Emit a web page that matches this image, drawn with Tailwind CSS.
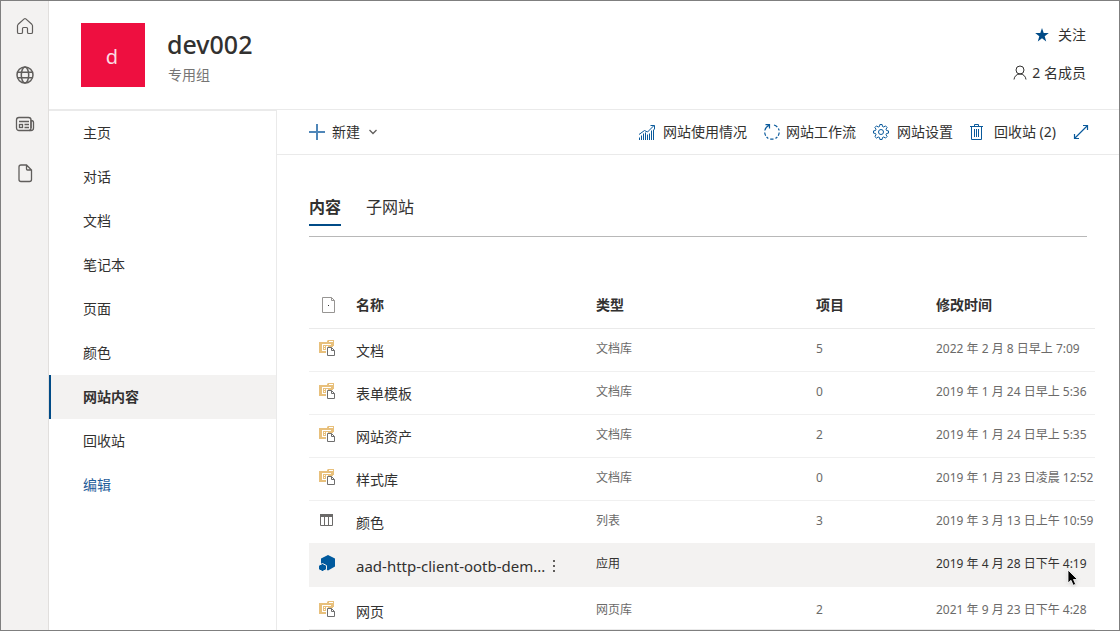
<!DOCTYPE html>
<html lang="zh-CN">
<head>
<meta charset="utf-8">
<meta name="viewport" content="width=device-width, initial-scale=1">
<title>dev002 - 网站内容</title>
<script src="https://cdn.jsdelivr.net/npm/@tailwindcss/browser@4"></script>
</head>
<body class="bg-white font-['Noto_Sans','Noto_Sans_CJK_SC',sans-serif] text-sm text-[#323130]">
<svg class="hidden" aria-hidden="true">
  <symbol id="library" viewBox="0 0 16 16">
    <path fill="#e8c07c" d="M0 2h8V1l1-1h6v6h-1v1H7v6H0z"/>
    <path fill="#fff" d="M10 1h4v1h-4zM3 4h9v1H4v5h3v1H3z"/>
    <path fill="#fff" d="M5 6h1v1H5zM7 6h2v1H7zM5 8h1v1H5z"/>
    <path fill="#fff" stroke="#6e6e6e" d="M8.500 7.500h4l3 3v5h-7z"/>
    <path fill="none" stroke="#6e6e6e" d="M12.500 7.500v3h3"/>
  </symbol>
</svg>
<div class="flex min-h-screen border border-[#7f7f7f]">
  <nav aria-label="应用栏" class="flex w-12 shrink-0 flex-col items-center gap-[29px] border-r border-[#e1dfdd] bg-[#f3f2f1] pt-[15px] text-[#605e5c]">
    <a href="#" aria-label="主页"><svg class="size-5" viewBox="0 0 20 20" fill="none" stroke="currentColor" stroke-width="1.200"><path d="M9.200 2.900a1.200 1.200 0 0 1 1.600 0l6 5.400c.4.400.7.900.7 1.500v6.400c0 .7-.5 1.300-1.300 1.300h-2.400c-.7 0-1.300-.5-1.300-1.300V12.500c0-.6-.4-1-1-1h-3c-.6 0-1 .4-1 1v3.700c0 .7-.5 1.300-1.300 1.300H3.800c-.8 0-1.300-.6-1.300-1.300V9.800c0-.6.3-1.100.7-1.500z"/></svg></a>
    <a href="#" aria-label="我的网站"><svg class="size-5" viewBox="0 0 20 20" fill="none" stroke="currentColor" stroke-width="1.500"><circle cx="10" cy="10" r="8"/><ellipse cx="10" cy="10" rx="3.700" ry="8"/><path d="M2.700 7.300h14.600M2.700 12.700h14.600"/></svg></a>
    <a href="#" aria-label="新闻"><svg class="size-5" viewBox="0 0 20 20" fill="none" stroke="currentColor" stroke-width="1.300"><rect x="1.500" y="3.500" width="14.500" height="13" rx="2.500"/><path d="M16 6.500c1.500 0 2.500.8 2.500 2V14c0 1.500-1 2.500-2.500 2.500h-2M16 6v8M4 7.500h10M9.500 10.500H14M9.500 13.500H14"/><rect x="4.500" y="10.500" width="3" height="3"/></svg></a>
    <a href="#" aria-label="文件"><svg class="size-5" viewBox="0 0 20 20" fill="none" stroke="currentColor" stroke-width="1.300"><path d="M6 2h5.500l5 5v9.500c0 1.200-.8 2-2 2H6c-1.200 0-2-.8-2-2V4c0-1.200.8-2 2-2zM11.500 2v4c0 .6.400 1 1 1h4"/></svg></a>
  </nav>
  <div class="flex min-w-0 flex-1 flex-col">
    <header class="flex items-start justify-between border-b border-[#eaeaea] pt-[22px] pr-[33px] pb-[22px] pl-8">
      <div class="flex gap-[22px]">
        <div class="flex size-16 items-center justify-center bg-[#ee0f40] pt-1 pr-0.5 pb-px text-xl text-[#fbdbe2]" aria-hidden="true">d</div>
        <div>
          <h1 class="pt-1 text-[25px] leading-[34px] font-medium">dev002</h1>
          <p class="pt-1 pl-px leading-5 text-[#767574]">专用组</p>
        </div>
      </div>
      <div class="flex flex-col items-end gap-[18px] pt-0.5">
        <button class="flex items-center gap-2 leading-5"><svg class="size-4 text-[#004b87]" viewBox="0 0 16 16" fill="currentColor"><path d="m8 1 1.700 5h5.100l-4.100 3.200 1.500 5.200L8 11.300l-4.200 3.100 1.500-5.200L1.200 6h5.100z"/></svg>关注</button>
        <button class="flex items-center gap-1 leading-5"><svg class="size-4" viewBox="0 0 16 16" fill="none" stroke="currentColor"><circle cx="8" cy="5" r="4"/><path d="M2 14.500C2.400 11.200 4.700 9 8 9s5.600 2.200 6 5.500"/></svg>2 名成员</button>
      </div>
    </header>
    <div class="flex flex-1">
      <nav aria-label="网站导航" class="w-[228px] shrink-0 border-t border-r border-[#eaeaea]">
        <ul class="leading-[44px]">
          <li><a href="#" class="block pl-[34px]">主页</a></li>
          <li><a href="#" class="block pl-[34px]">对话</a></li>
          <li><a href="#" class="block pl-[34px]">文档</a></li>
          <li><a href="#" class="block pl-[34px]">笔记本</a></li>
          <li><a href="#" class="block pl-[34px]">页面</a></li>
          <li><a href="#" class="block pl-[34px]">颜色</a></li>
          <li><a href="#" aria-current="page" class="block border-l-2 border-[#004b87] bg-[#f3f2f1] pl-8 font-bold">网站内容</a></li>
          <li><a href="#" class="block pl-[34px]">回收站</a></li>
          <li><a href="#" class="block pl-[34px] text-[#1f5c99]">编辑</a></li>
        </ul>
      </nav>
      <main class="min-w-0 flex-1">
        <div role="toolbar" aria-label="命令" class="flex h-[45px] items-center justify-between border-b border-[#eaeaea] pr-[30px] pl-8">
          <button class="flex items-center gap-[7px]"><svg class="size-4" viewBox="0 0 16 16" fill="none" stroke="#4f86b8" stroke-width="2"><path d="M8 0v16M0 8h16"/></svg>新建<svg class="size-3" viewBox="0 0 12 12" fill="none" stroke="#605e5c" stroke-width="1.300"><path d="m2.500 4 3.500 3.500L9.500 4"/></svg></button>
          <div class="flex items-center gap-[17px] text-[#0a5a9c]">
            <button class="flex items-center gap-2"><svg class="size-4" viewBox="0 0 16 16" fill="none" stroke="currentColor"><path d="M.5 16v-2.500M2.500 16v-4.500M4.500 16V9.500M6.500 16V8.500M8.500 16v-5.500M10.500 16V9.500M12.500 16V6.500M14.500 16V5.500M0 10.500l5.500-4L8.500 8l6.500-6.500M11.500 1.500h4v4"/></svg><span class="text-[#323130]">网站使用情况</span></button>
            <button class="flex items-center gap-1.5"><svg class="size-4" viewBox="0 0 16 16" fill="none" stroke="currentColor" stroke-width="1.200"><path d="M5.200 1.200A7.300 7.300 0 0 0 .8 6.500M.7 8.500a7.300 7.300 0 0 0 1 3.200M2.600 13a7.300 7.300 0 0 0 1.700 1.400M1.500.6h4v4M10 1a7.300 7.300 0 0 1 3.300 2M14.400 4.500a7.300 7.300 0 0 1 .7 2M15.200 8.500a7.300 7.300 0 0 1-1 3.200M13.300 13a7.300 7.300 0 0 1-1.800 1.400M6.200 15.200h3.300"/></svg><span class="text-[#323130]">网站工作流</span></button>
            <button class="flex items-center gap-2"><svg class="size-4" viewBox="0 0 16 16" fill="none" stroke="currentColor"><path d="M6.900.5h2.200l.4 2 1.300.5 1.700-1.100 1.600 1.600L13 5.200l.5 1.300 2 .4v2.200l-2 .4-.5 1.300 1.100 1.700-1.600 1.600-1.700-1.100-1.300.5-.4 2H6.900l-.4-2-1.300-.5-1.700 1.100-1.600-1.600L3 10.800l-.5-1.300-2-.4V6.900l2-.4L3 5.200 1.900 3.500l1.600-1.600L5.200 3l1.300-.5z"/><circle cx="8" cy="8" r="2.500"/></svg><span class="text-[#323130]">网站设置</span></button>
            <button class="flex items-center gap-2"><svg class="size-4" viewBox="0 0 16 16" fill="none" stroke="currentColor"><path d="M0 2.500h13M4.500 2V.5h4V2M1.500 3v12.500h10V3M4.500 5v8M6.500 5v8M8.500 5v8"/></svg><span class="text-[#323130]">回收站 (2)</span></button>
            <button aria-label="展开"><svg class="size-4" viewBox="0 0 16 16" fill="none" stroke="currentColor" stroke-width="1.200"><path d="M1.500 14.500l13-13M10 1.500h4.500V6M1.500 10v4.500H6"/></svg></button>
          </div>
        </div>
        <div role="tablist" class="mt-[38px] mr-8 ml-8 flex gap-[25px] border-b border-[#b8b8b8] pb-2.5 text-base leading-7">
          <button role="tab" aria-selected="true" class="border-b-2 border-[#004b87] pb-[3px] font-bold">内容</button>
          <button role="tab" aria-selected="false" class="border-b-2 border-transparent pb-[3px]">子网站</button>
        </div>
        <div class="mt-[46px] pr-6 pl-8">
          <table class="w-full table-fixed text-left text-xs text-[#6b6a69]">
            <colgroup><col class="w-[47px]"><col class="w-60"><col><col class="w-[120px]"><col class="w-[159px]"></colgroup>
            <thead class="text-sm text-[#323130]">
              <tr class="h-[45px] border-b border-[#eaeaea]">
                <th class="pl-3" aria-label="图标"><svg class="size-4" viewBox="0 0 16 16" fill="none" stroke="#979593"><path d="M1.500.5h9l3 3v12h-12zM10.500.5v3h3"/><path stroke="#323130" d="M7 8.500h1"/></svg></th>
                <th>名称</th><th>类型</th><th>项目</th><th>修改时间</th>
              </tr>
            </thead>
            <tbody>
              <tr class="h-[43px] border-b border-[#f0f0f0]"><td class="pl-2.5"><svg class="mb-1 size-4"><use href="#library"/></svg></td><td class="pt-0.5 text-sm text-[#323130]"><a href="#">文档</a></td><td class="pb-0.5">文档库</td><td class="pb-0.5">5</td><td class="pb-0.5 whitespace-nowrap">2022 年 2 月 8 日早上 7:09</td></tr>
              <tr class="h-[43px] border-b border-[#f0f0f0]"><td class="pl-2.5"><svg class="mb-1 size-4"><use href="#library"/></svg></td><td class="pt-0.5 text-sm text-[#323130]"><a href="#">表单模板</a></td><td class="pb-0.5">文档库</td><td class="pb-0.5">0</td><td class="pb-0.5 whitespace-nowrap">2019 年 1 月 24 日早上 5:36</td></tr>
              <tr class="h-[43px] border-b border-[#f0f0f0]"><td class="pl-2.5"><svg class="mb-1 size-4"><use href="#library"/></svg></td><td class="pt-0.5 text-sm text-[#323130]"><a href="#">网站资产</a></td><td class="pb-0.5">文档库</td><td class="pb-0.5">2</td><td class="pb-0.5 whitespace-nowrap">2019 年 1 月 24 日早上 5:35</td></tr>
              <tr class="h-[43px] border-b border-[#f0f0f0]"><td class="pl-2.5"><svg class="mb-1 size-4"><use href="#library"/></svg></td><td class="pt-0.5 text-sm text-[#323130]"><a href="#">样式库</a></td><td class="pb-0.5">文档库</td><td class="pb-0.5">0</td><td class="pb-0.5 whitespace-nowrap">2019 年 1 月 23 日凌晨 12:52</td></tr>
              <tr class="h-[43px]"><td class="pl-2.5"><svg class="mb-1 size-4" viewBox="0 0 16 16" fill="none" stroke="#6b6a69"><path d="M1.500 2.500h12v11h-12zM5.500 4v9M9.500 4v9"/><path fill="#6b6a69" stroke="none" d="M1 2h13v3H1z"/></svg></td><td class="pt-0.5 text-sm text-[#323130]"><a href="#">颜色</a></td><td class="pb-0.5">列表</td><td class="pb-0.5">3</td><td class="pb-0.5 whitespace-nowrap">2019 年 3 月 13 日上午 10:59</td></tr>
              <tr class="h-11 bg-[#f3f2f1] text-[#323130]"><td class="pl-2.5"><svg class="mb-1 size-4" viewBox="0 0 16 16" fill="#005a9e"><path d="m9 0 7 3.500v8L9 15.500l-1-.5c0-3-1.500-5-4-5.500L2 9V3.500z"/><path stroke="#f3f2f1" d="m3.500 8.500 4 2v4l-4 2-4-2v-4z"/></svg></td><td class="pt-0.5 text-[15px]"><span class="flex items-center gap-1.5"><a href="#">aad-http-client-ootb-dem...</a><button aria-label="更多操作"><svg class="h-4 w-1.5" viewBox="0 0 6 16" fill="#605e5c"><path d="M2 2h2v2H2zM2 7h2v2H2zM2 12h2v2H2z"/></svg></button></span></td><td class="pb-0.5">应用</td><td></td><td class="relative pb-0.5 whitespace-nowrap">2019 年 4 月 28 日下午 4:19<svg class="absolute top-[26px] right-[14px] h-[18px] w-3.5 drop-shadow" viewBox="0 0 14 18" aria-hidden="true"><path fill="#000" stroke="#fff" stroke-width=".8" d="M1 1v13l3-2.700 2.200 5 2.500-1.100L6.500 10.500h4z"/></svg></td></tr>
              <tr class="h-[42px] border-b border-[#eaeaea]"><td class="pl-2.5"><svg class="mt-0.5 size-4"><use href="#library"/></svg></td><td class="pt-2 text-sm text-[#323130]"><a href="#">网页</a></td><td class="pt-1">网页库</td><td class="pt-1">2</td><td class="pt-1 whitespace-nowrap">2021 年 9 月 23 日下午 4:28</td></tr>
            </tbody>
          </table>
        </div>
      </main>
    </div>
  </div>
</div>
</body>
</html>
